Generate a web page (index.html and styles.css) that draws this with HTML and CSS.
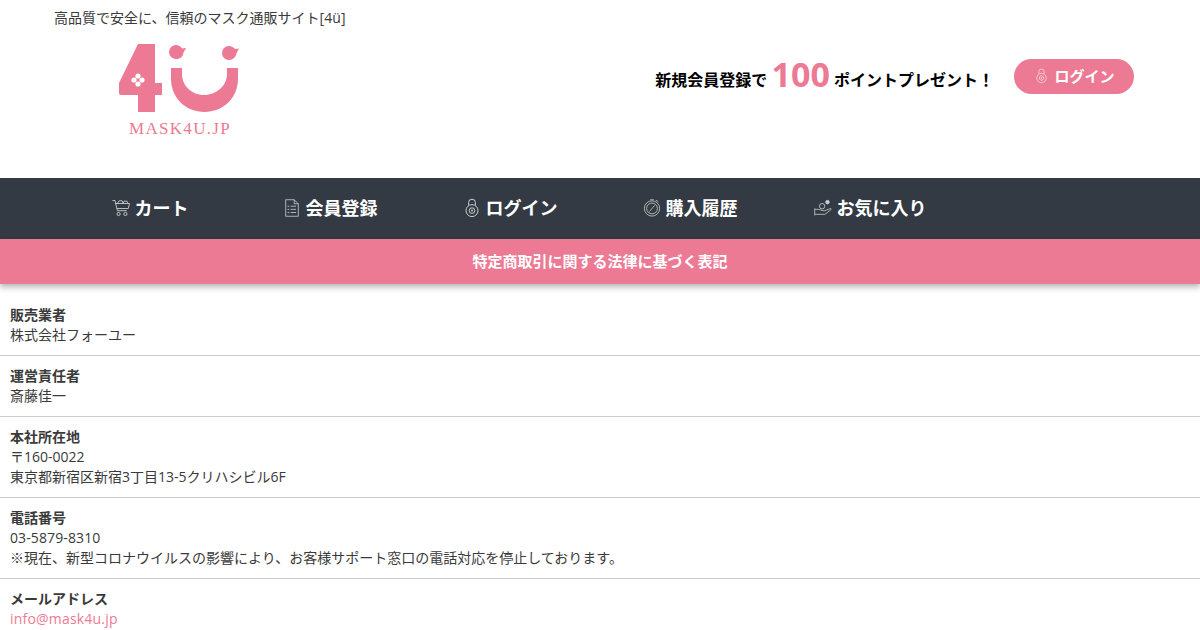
FILE: index.html
```html
<!DOCTYPE html>
<html lang="ja">
<head>
<meta charset="utf-8">
<title>特定商取引に関する法律に基づく表記</title>
<link rel="stylesheet" href="styles.css">
</head>
<body>
<svg class="defs" width="0" height="0" aria-hidden="true">
  <symbol id="i-lock" viewBox="0 0 14 20">
    <path d="M3.6 7.5V4.6a3.4 3.4 0 0 1 6.8 0v2.900" fill="none" stroke="currentColor"/>
    <circle cx="7" cy="12.600" r="6" fill="none" stroke="currentColor"/>
    <circle cx="7" cy="12.600" r="2.800" fill="none" stroke="currentColor"/>
    <circle cx="7" cy="12.600" r="1" fill="currentColor"/>
  </symbol>
</svg>
<header class="top">
  <div class="brand">
    <p class="tagline">高品質で安全に、信頼のマスク通販サイト[<span class="latin">4ü</span>]</p>
    <svg class="logo" viewBox="0 0 120 94" width="120" height="94" role="img" aria-label="MASK4U.JP">
      <path class="lg" d="M19 0H36V39H43V51H36V68H19V51H2Q0 51 0 49V39Z"/>
      <g fill="#fff">
        <circle cx="19" cy="32" r="2.600"/><circle cx="19" cy="40" r="2.600"/><circle cx="15" cy="36" r="2.600"/><circle cx="23" cy="36" r="2.600"/>
      </g>
      <path class="lg" d="M52 24H63V30C63 42 73 51 85 51S108 42 108 30V24H119V35C119 54 104 68 85.500 68S52 54 52 35Z"/>
      <path class="lg" d="M57 1C60 1 62 3 63 4.500L67 4 64.500 8.500C64 13 61 15 57 15A7 7 0 0 1 57 1Z"/>
      <path class="lg" d="M110 2C113 2 115 4 116 5L120 4.500 117.500 9C117 13 114 16 110 16A7 7 0 0 1 110 2Z"/>
      <text x="61" y="90" class="logotext" text-anchor="middle">MASK4U.JP</text>
    </svg>
  </div>
  <div class="promo">
    <p class="promo-text">新規会員登録で <span class="points">100</span> ポイントプレゼント！</p>
    <a class="login-btn" href="#"><svg class="btn-icon"><use href="#i-lock"/></svg><span>ログイン</span></a>
  </div>
</header>
<nav class="nav">
  <a class="nav-item" href="#">
    <svg class="nav-icon" viewBox="0 0 18 18" fill="none" stroke="currentColor" stroke-width=".9">
      <path d="M.5 1.500H3l2.400 10.200h9.400"/><path d="M3.400 4.500H17.500l-1.200 5H5"/><path d="M5.500 4.200l1.600-2.400h3l1 2.400M11 4.200l1-2h3l1 2.200"/>
      <circle cx="6.600" cy="15" r="1.600"/><circle cx="13.400" cy="15" r="1.600"/>
    </svg><span>カート</span>
  </a>
  <a class="nav-item" href="#">
    <svg class="nav-icon" viewBox="0 0 16 20" fill="none" stroke="currentColor" stroke-width=".9">
      <path d="M1 .8H10.500L15 5.300V19.200H1Z"/><path d="M10.500.8V5.300H15"/><path d="M6.500 8H12.500M6.500 11.500H12.500M6.500 15H12.500M3 8H5M3 11.500H5M3 15H5"/>
    </svg><span>会員登録</span>
  </a>
  <a class="nav-item nav-item-login" href="#"><svg class="nav-icon nav-lock"><use href="#i-lock"/></svg><span>ログイン</span></a>
  <a class="nav-item" href="#">
    <svg class="nav-icon" viewBox="0 0 20 20" fill="none" stroke="currentColor" stroke-width=".9">
      <circle cx="10" cy="10.500" r="8.500"/><circle cx="10" cy="10.500" r="6"/><path d="M7 14L13 7"/><path d="M8 .8h4M14.500 1.500l2.500 1.500"/>
    </svg><span>購入履歴</span>
  </a>
  <a class="nav-item" href="#">
    <svg class="nav-icon" viewBox="0 0 20 18" fill="none" stroke="currentColor" stroke-width=".9">
      <path d="M.8 9.500V17.200M.8 10.500H5c2 0 3 1.500 5 1.500h2l6.500-2.500c.8.500.5 1.300 0 1.800L12 16H.8"/>
      <circle cx="9" cy="7" r="3"/><circle cx="15" cy="2.500" r="2" fill="currentColor"/>
    </svg><span>お気に入り</span>
  </a>
</nav>
<h1 class="title">特定商取引に関する法律に基づく表記</h1>
<main class="info">
  <section class="row">
    <h2 class="label">販売業者</h2>
    <p class="value">株式会社フォーユー</p>
  </section>
  <section class="row">
    <h2 class="label">運営責任者</h2>
    <p class="value">斎藤佳一</p>
  </section>
  <section class="row">
    <h2 class="label">本社所在地</h2>
    <p class="value">〒160-0022</p>
    <p class="value">東京都新宿区新宿3丁目13-5クリハシビル6F</p>
  </section>
  <section class="row">
    <h2 class="label">電話番号</h2>
    <p class="value"><span class="latin">03-5879-8310</span></p>
    <p class="value">※現在、新型コロナウイルスの影響により、お客様サポート窓口の電話対応を停止しております。</p>
  </section>
  <section class="row">
    <h2 class="label">メールアドレス</h2>
    <p class="value"><a class="mail" href="#">info@mask4u.jp</a></p>
  </section>
</main>
</body>
</html>
```
FILE: styles.css
```css
* { box-sizing: border-box; }
html, body { margin: 0; padding: 0; }
body {
  width: 1200px;
  height: 630px;
  overflow: hidden;
  background: #fff;
  color: #3a3a3a;
  font-family: "Open Sans", "Noto Sans CJK JP", sans-serif;
  font-size: 14px;
  line-height: 20px;
}
.defs { position: absolute; }
p, h1, h2 { margin: 0; }
a { text-decoration: none; color: inherit; }
.latin { letter-spacing: .12px; }

.top {
  height: 178px;
  display: flex;
  justify-content: space-between;
  padding: 8px 66px 0 54px;
}
.tagline { height: 36px; }
.logo { display: block; margin-left: 65px; }
.lg { fill: #ec7a94; }
.logotext { fill: #ec7a94; font-family: "Liberation Serif", serif; font-size: 17px; letter-spacing: 1.3px; }

.promo { display: flex; align-items: center; gap: 20px; height: 35px; margin-top: 51px; }
.promo-text { color: #000; font-size: 16px; font-weight: 700; line-height: 35px; white-space: nowrap; margin-top: 2px; }
.points { color: #ec7a94; font-size: 34px; vertical-align: -1px; line-height: 35px; }
.login-btn {
  width: 120px;
  height: 35px;
  border-radius: 18px;
  background: #ec7a94;
  color: #fff;
  font-size: 15px;
  font-weight: 700;
  display: flex;
  align-items: center;
  justify-content: center;
  gap: 7px;
  padding: 0 0 2px 3px;
}
.btn-icon { width: 11px; height: 16px; opacity: .7; }

.nav {
  height: 61px;
  background: #333a43;
  display: grid;
  grid-template-columns: repeat(6, 180px);
  padding: 0 60px 2px;
}
.nav-item {
  display: flex;
  align-items: center;
  justify-content: center;
  gap: 5px;
  color: #fff;
  font-size: 18px;
  font-weight: 700;
}
.nav-item-login { padding-left: 2px; }
.nav-icon { width: 18px; height: 18px; color: #ccc; flex: none; }
.nav-lock { width: 14px; height: 20px; margin-right: 2px; }

.title {
  height: 45px;
  background: #ec7a94;
  color: #fff;
  font-size: 15px;
  font-weight: 700;
  line-height: 45px;
  text-align: center;
  box-shadow: 0 3px 6px rgba(0, 0, 0, .3);
}
.info { padding-top: 11px; }
.row { padding: 10px; border-bottom: 1px solid #ccc; }
.label { font-size: 14px; font-weight: 700; line-height: 20px; }
.mail { color: #ec7a94; letter-spacing: .2px; }
```
